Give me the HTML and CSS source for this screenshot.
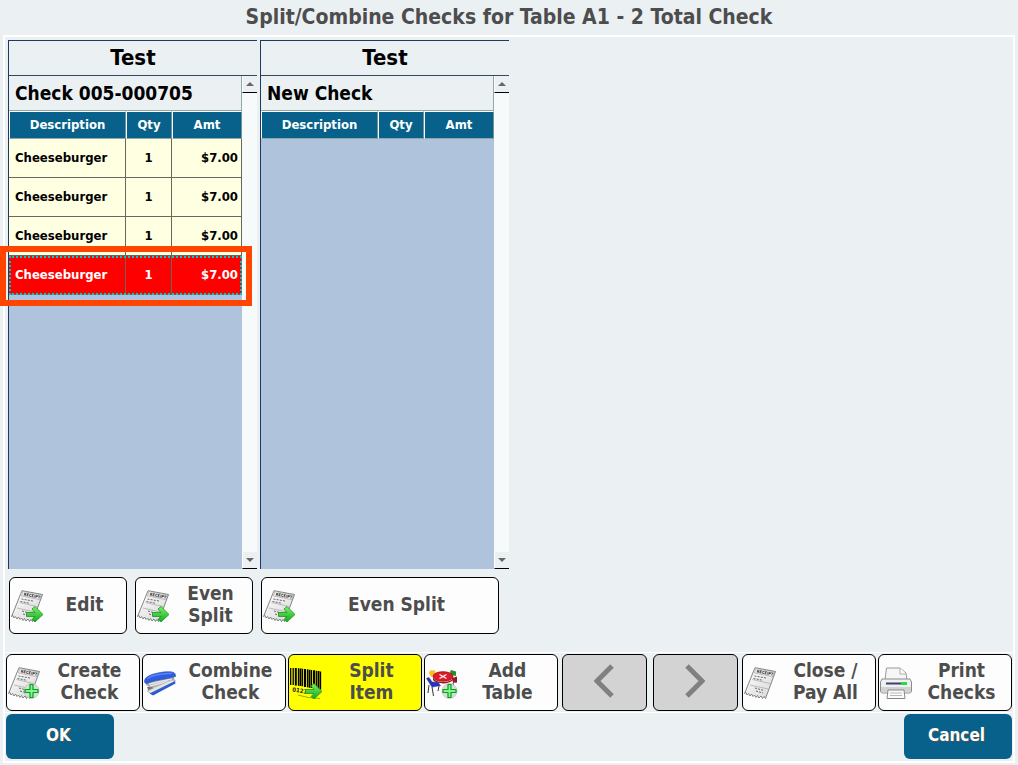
FILE: index.html
```html
<!DOCTYPE html>
<html lang="en">
<head>
    <meta charset="UTF-8">
    <meta name="viewport" content="width=device-width, initial-scale=1.0">
    <title>Split/Combine Checks</title>
    <link rel="stylesheet" href="styles.css">
</head>
<body>

    <!-- Shared icons -->
    <svg class="sprite" aria-hidden="true">
        <defs>
            <linearGradient id="paper" x1="0" y1="0" x2="1" y2="1">
                <stop offset="0" stop-color="#ffffff"/>
                <stop offset="1" stop-color="#d6d6d6"/>
            </linearGradient>
            <linearGradient id="green" x1="0" y1="0" x2="0" y2="1">
                <stop offset="0" stop-color="#7df06a"/>
                <stop offset="1" stop-color="#16a820"/>
            </linearGradient>
        </defs>
        <symbol id="receipt" viewBox="0 0 32 32">
            <path d="M11 .7 31.5 4.5 21.5 31.5 20 29.5 18.5 31.5 17 29 15 31 13.5 28.5 12 30.5 10.5 28 9 29.5 7.5 27 6 29 4.5 26.5 3 28 2 25.5 .5 26.5Z" fill="url(#paper)" stroke="#666" stroke-width=".8"/>
            <path d="M12 1.5 30.5 5 28.5 9.5 10.5 6Z" fill="#f4f4f4" stroke="#888" stroke-width=".5"/>
            <path d="M8.5 12.500 26 16.500M6 18 24 22" stroke="#999" stroke-width=".6"/>
            <path d="M10.5 9 22 11M9.5 11.5 19 13.3M11 21 20 23.5M12 24 19 26" stroke="#666" stroke-width="1" stroke-dasharray="2 1.2" fill="none"/>
            <text x="12.5" y="5.5" transform="rotate(11 12.5 5.5)" font-size="4" font-weight="bold" fill="#222">RECEIPT</text>
        </symbol>
        <symbol id="arrow" viewBox="0 0 32 32">
            <path d="M15.5 22.5H24L21 19 24 16.5 32 24.5 24 32 21 29.5 24 26.5H15.5Z" fill="url(#green)" stroke="#149a1e" stroke-width=".8" stroke-linejoin="round"/>
        </symbol>
        <symbol id="plus" viewBox="0 0 32 32">
            <circle cx="23.5" cy="24" r="7.5" fill="#d5ddd5" stroke="#b4bcb4" stroke-width=".6"/>
            <path d="M22 17.5h3v5h5v3h-5v5h-3v-5h-5v-3h5z" fill="#7dfa8a" stroke="#0b9a22" stroke-width="1.2" stroke-linejoin="round"/>
        </symbol>
        <symbol id="stapler" viewBox="0 0 32 32">
            <path d="M1.5 15.5 30 10 30.5 13.5 14 19 7 21 2 18Z" fill="#a9a9a9"/>
            <path d="M5 17 28 12M6 19 24 14.5" stroke="#e6e6e6" stroke-width="1.3"/>
            <path d="M3 20 8 20 12 22 5 25.500Z" fill="#777"/>
            <path d="M3 24 27 13 31.5 13.5 30 16 8 27Z" fill="#e4e4e4" stroke="#999" stroke-width=".5"/>
            <path d="M5.500 26.500 31 14 31.5 16.500 9 28.500Z" fill="#2f5bd0"/>
            <path d="M.4 14C1 8.500 11 6 21 4.800 28 4.200 32 5 31.6 9.500 25 12 12 12.500 3 16.500 1 16.500.3 15.500.4 14Z" fill="#2f5de0" stroke="#2445ac" stroke-width=".5"/>
            <path d="M3 11.500C9 7.800 19 6.300 28 6.200" stroke="#5c83f2" stroke-width="1.4" fill="none"/>
        </symbol>
        <symbol id="barcode" viewBox="0 0 32 32">
            <path d="M.7 1v17M3.2 1v17M8.5 1.2v17.500M12.5 1.8v17.500M17.500 2.300v18M21.5 3v18M26.3 3.8v18M30.5 4.500v18" stroke="#000" stroke-width="1.3"/>
            <path d="M5.8 1v17.500M10.5 1.5v17.500M15 2v18M19.5 2.800v18M24 3.300v18M28.5 4v18" stroke="#000" stroke-width="2"/>
            <text x="2" y="24.500" transform="rotate(9 2 24.500)" font-size="6" fill="#222">0123</text>
            <path d="M8 28 18 30.5 30 31.500" stroke="#a6a600" stroke-width="1" fill="none"/>
        </symbol>
        <symbol id="table" viewBox="0 0 32 32">
            <path d="M3 6 4 3.500 9 3.500 9.500 8 5 10Z" fill="#ffb91a"/>
            <path d="M24 5 25 3 30 4.500 30 9 25 8Z" fill="#17952a"/>
            <path d="M26 11 31 9.5 31 15 27 16Z" fill="#b01422"/>
            <path d="M7 10.500C9 16 24 17 27 11V13C23 18 10 17 7 13Z" fill="#9c121b"/>
            <ellipse cx="17" cy="9.500" rx="10" ry="4.800" fill="#e01b26" stroke="#951018" stroke-width=".8"/>
            <path d="m13.500 7.500 7 4m0-4-7 4" stroke="#fff" stroke-width="1.2"/>
            <path d="M.5 11.5 3 10.500 6 15 12 15.500 14.500 18.500 6 20Z" fill="#2533c5" stroke="#131d80" stroke-width=".5"/>
            <path d="M3 18 2 26M6 20 7.5 29M13 19 12 24M27 16 28 20M30 11V16" stroke="#333" stroke-width="1" fill="none"/>
        </symbol>
        <symbol id="printer" viewBox="0 0 32 32">
            <path d="M5 13 6.500 1H20L26 6 27 13Z" fill="#f6f6f6" stroke="#999"/>
            <path d="M20 1V7H26" fill="#fff" stroke="#999" stroke-width=".8"/>
            <path d="M2 12H30L31.5 15V24Q31.5 26 29 26H3Q.5 26 .5 24V15Z" fill="#f0f0f0" stroke="#8b8b8b"/>
            <path d="M1 20H31V24Q31 25.500 29 25.500H3Q1 25.500 1 24Z" fill="#d2d2d2"/>
            <path d="M6 15.5H26V17.5H6Z" fill="#39436a"/>
            <path d="M21 15H27V18H21Z" fill="#1be04a"/>
            <path d="M8 23H24L25 31.5H7Z" fill="#fafafa" stroke="#888"/>
            <path d="M10 26H22M10 28.5H22" stroke="#aaa" stroke-width=".8"/>
        </symbol>
    </svg>

    <h1 class="title">Split/Combine Checks for Table A1 - 2 Total Check</h1>

    <main class="frame">
        <!-- Checks -->
        <div class="board">
            <section class="check">
                <div class="panel">
                    <h2 class="server">Test</h2>
                    <div class="list">
                        <div class="items">
                            <h3 class="check-name">Check 005-000705</h3>
                            <table>
                                <thead>
                                    <tr><th class="desc">Description</th><th class="qty">Qty</th><th class="amt">Amt</th></tr>
                                </thead>
                                <tbody>
                                    <tr><td class="desc">Cheeseburger</td><td class="qty">1</td><td class="amt">$7.00</td></tr>
                                    <tr><td class="desc">Cheeseburger</td><td class="qty">1</td><td class="amt">$7.00</td></tr>
                                    <tr><td class="desc">Cheeseburger</td><td class="qty">1</td><td class="amt">$7.00</td></tr>
                                    <tr class="selected"><td class="desc">Cheeseburger</td><td class="qty">1</td><td class="amt">$7.00</td></tr>
                                </tbody>
                            </table>
                        </div>
                        <div class="scroll">
                            <button class="scroll-btn" aria-label="Scroll up"><span class="tri up"></span></button>
                            <button class="scroll-btn" aria-label="Scroll down"><span class="tri down"></span></button>
                        </div>
                    </div>
                </div>
                <div class="check-actions">
                    <button class="btn"><svg class="icon" viewBox="0 0 32 32"><use href="#receipt"/><use href="#arrow"/></svg><span class="label">Edit</span></button>
                    <button class="btn"><svg class="icon" viewBox="0 0 32 32"><use href="#receipt"/><use href="#arrow"/></svg><span class="label">Even<br>Split</span></button>
                </div>
            </section>

            <section class="check">
                <div class="panel">
                    <h2 class="server">Test</h2>
                    <div class="list">
                        <div class="items">
                            <h3 class="check-name">New Check</h3>
                            <table>
                                <thead>
                                    <tr><th class="desc">Description</th><th class="qty">Qty</th><th class="amt">Amt</th></tr>
                                </thead>
                            </table>
                        </div>
                        <div class="scroll">
                            <button class="scroll-btn" aria-label="Scroll up"><span class="tri up"></span></button>
                            <button class="scroll-btn" aria-label="Scroll down"><span class="tri down"></span></button>
                        </div>
                    </div>
                </div>
                <div class="check-actions">
                    <button class="btn"><svg class="icon" viewBox="0 0 32 32"><use href="#receipt"/><use href="#arrow"/></svg><span class="label">Even Split</span></button>
                </div>
            </section>
        </div>

        <!-- Toolbar -->
        <div class="toolbar">
            <button class="btn"><svg class="icon" viewBox="0 0 32 32"><use href="#receipt"/><use href="#plus"/></svg><span class="label">Create<br>Check</span></button>
            <button class="btn wide"><svg class="icon" viewBox="0 0 32 32"><use href="#stapler"/></svg><span class="label">Combine<br>Check</span></button>
            <button class="btn active"><svg class="icon" viewBox="0 0 32 32"><use href="#barcode"/><use href="#arrow"/></svg><span class="label">Split<br>Item</span></button>
            <button class="btn"><svg class="icon" viewBox="0 0 32 32"><use href="#table"/><use href="#plus"/></svg><span class="label">Add<br>Table</span></button>
            <div class="pager">
                <button class="btn nav" aria-label="Previous" disabled><svg class="chevron" viewBox="0 0 20 34"><path d="M18 2 3 17 18 32"/></svg></button>
                <button class="btn nav" aria-label="Next" disabled><svg class="chevron" viewBox="0 0 20 34"><path d="M2 2 17 17 2 32"/></svg></button>
            </div>
            <button class="btn"><svg class="icon" viewBox="0 0 32 32"><use href="#receipt"/></svg><span class="label">Close /<br>Pay All</span></button>
            <button class="btn"><svg class="icon" viewBox="0 0 32 32"><use href="#printer"/></svg><span class="label">Print<br>Checks</span></button>
        </div>

        <div class="footer">
            <button class="confirm">OK</button>
            <button class="confirm">Cancel</button>
        </div>
    </main>

</body>
</html>
```
FILE: styles.css
```css
* {
    box-sizing: border-box;
}

body {
    margin: 0;
    min-height: 100vh;
    display: flex;
    flex-direction: column;
    background: #ebf0f3;
    font-family: "DejaVu Sans Condensed", "Noto Sans", sans-serif;
    font-weight: bold;
    color: #000;
}

button {
    font: inherit;
    cursor: pointer;
}

h1, h2, h3 {
    margin: 0;
}

.sprite {
    position: absolute;
    width: 0;
    height: 0;
}

.title {
    height: 35px;
    font-size: 21px;
    line-height: 34px;
    text-align: center;
    color: #4d4d4d;
}

.frame {
    flex: 1;
    display: flex;
    flex-direction: column;
    margin: 0 3px 2px;
    border: 2px solid #fff;
}

/* Checks */
.board {
    flex: 1;
    display: flex;
    gap: 3px;
    padding: 3px 3px 18px;
}

.check {
    width: 249px;
    display: flex;
    flex-direction: column;
    gap: 8px;
}

.panel {
    flex: 1;
    display: flex;
    flex-direction: column;
    border-top: 1px solid #1f3864;
    border-left: 1px solid #1f3864;
}

.server {
    height: 35px;
    font-size: 22px;
    line-height: 34px;
    text-align: center;
    border-bottom: 1px solid #33475f;
}

.list {
    flex: 1;
    display: flex;
}

.items {
    flex: 1;
    background: #b0c3dd;
}

.check-name {
    height: 35px;
    padding-left: 6px;
    font-size: 19px;
    line-height: 34px;
    background: #ebf0f3;
    border-right: 1px solid #8fa8a8;
    border-bottom: 1px solid #8fa8a8;
}

table {
    width: 100%;
    table-layout: fixed;
    border-collapse: separate;
    border-spacing: 0;
    font-size: 13px;
}

th {
    height: 28px;
    padding: 0 0 2px;
    background: #07618a;
    color: #fff;
    border-top: 1px solid #fff;
    border-left: 1px solid #fff;
    border-right: 1px solid #6f9299;
    border-bottom: 1px solid #8fa8a8;
}

td {
    height: 39px;
    padding: 0 3px 2px 6px;
    background: #ffffe1;
    border-right: 1px solid #68685c;
    border-bottom: 1px solid #68685c;
}

.desc {
    width: 117px;
}

.qty {
    width: 46px;
}

td.qty {
    padding-left: 3px;
    text-align: center;
}

td.amt {
    text-align: right;
}

.selected {
    position: relative;
    outline: 2px dotted #00c8c8;
    outline-offset: -2px;
}

.selected td {
    background: #f00;
    color: #fff;
}

/* Callout frame round the selected item */
.selected .amt::after {
    content: "";
    position: absolute;
    inset: -10px -10px -11px -9px;
    border: 6px solid #ff4500;
}

.scroll {
    width: 15px;
    display: flex;
    flex-direction: column;
    justify-content: space-between;
    background: #f6fafb;
}

.scroll-btn {
    height: 17px;
    padding: 0;
    display: flex;
    align-items: center;
    justify-content: center;
    background: #ebf0f3;
    border: 0;
    border-left: 1px solid #fff;
    border-bottom: 1px solid #000;
}

.tri {
    border: 4px solid transparent;
}

.tri.up {
    border-top: 0;
    border-bottom-color: #666;
}

.tri.down {
    border-bottom: 0;
    border-top-color: #666;
}

.check-actions {
    display: flex;
    gap: 8px;
    padding: 0 4px 0 1px;
}

.check:last-child .check-actions {
    padding-right: 10px;
}

/* Buttons */
.btn {
    flex: 134 1 0;
    height: 57px;
    padding: 0 0 0 1px;
    display: flex;
    align-items: center;
    background: #fdfdfd;
    border: 1px solid #000;
    border-radius: 6px;
    color: #4d4d4d;
    font-size: 19px;
    line-height: 22px;
}

.btn.wide {
    flex-grow: 144;
}

.btn.active {
    background: #ff0;
}

.icon {
    flex: none;
    width: 32px;
    height: 32px;
}

.label {
    flex: 1;
    padding-bottom: 4px;
    text-align: center;
}

.toolbar {
    display: flex;
    gap: 2px;
    padding: 1px 1px 1px;
    border-top: 1px solid #fff;
    border-bottom: 1px solid #fff;
}

.pager {
    flex: 180 1 0;
    display: flex;
    gap: 6px;
    padding: 0 2px;
}

.btn.nav {
    justify-content: center;
    padding: 0 0 4px;
    background: #d3d3d3;
}

.chevron {
    width: 20px;
    height: 34px;
    fill: none;
    stroke: #808080;
    stroke-width: 5;
}

.footer {
    display: flex;
    justify-content: space-between;
    padding: 1px 1px 2px;
}

.confirm {
    width: 108px;
    height: 45px;
    padding: 0 3px 3px 0;
    background: #07618a;
    border: 0;
    border-radius: 6px;
    color: #fff;
    font-size: 17px;
    text-shadow: 1px 1px 1px #555;
}
```
